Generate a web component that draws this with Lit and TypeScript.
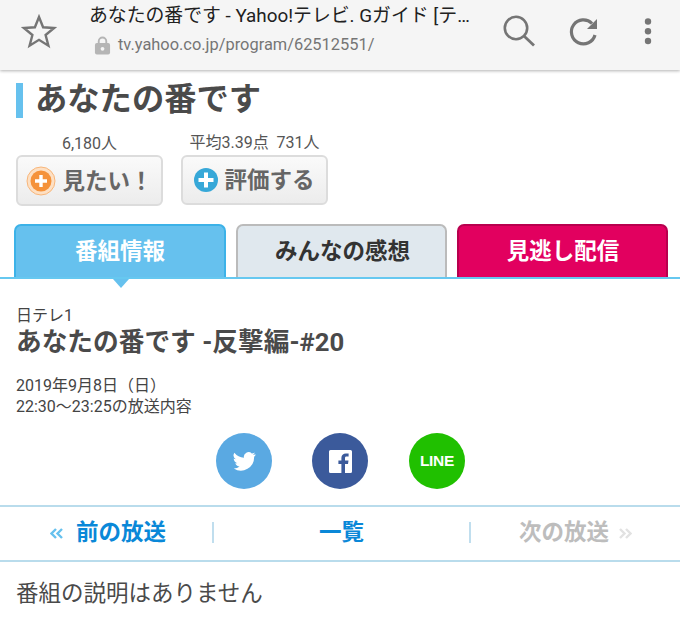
import { LitElement, html, css } from "lit";
import { customElement } from "lit/decorators.js";

@customElement("app-root")
export class AppRoot extends LitElement {
  static styles = css`
    :host { display: block; width: 680px; height: 621px; overflow: hidden; background: #fff; color: #4a4a4a;
      font-family: Roboto, "Noto Sans CJK JP", sans-serif; }
    .bar { height: 70px; background: #f5f5f5; box-shadow: 0 1px 3px rgba(0,0,0,.3); display: flex; align-items: flex-start; position: relative; }
    .star { width: 40px; height: 40px; margin: 11px 30px 0 19px; flex: none; }
    .addr { width: 385px; flex: none; padding-top: 3px; }
    .ttl { font-size: 18.85px; line-height: 26px; color: #212121; white-space: nowrap; }
    .url { display: flex; align-items: center; gap: 7px; margin-top: 5px; margin-left: 5px; font-size: 16.4px; line-height: 22px; color: #757575; }
    .tools { display: flex; margin-left: 26px; }
    .tools svg { display: block; flex: none; }
    .tools .rl { margin-left: 28px; }
    .tools .dots { margin-left: 41px; }
    .head { display: flex; align-items: center; margin: 13px 0 0 16px; height: 35px; }
    .head i { width: 7px; height: 35px; background: #66c1ee; margin-right: 12px; }
    .head h1 { margin: -2px 0 0; font-size: 32.3px; line-height: 35px; font-weight: 700; color: #4a4a4a; }
    .acts { display: flex; gap: 18px; margin: 16px 0 0 16px; }
    .act { width: 147px; display: flex; flex-direction: column; align-items: center; }
    .cnt { font-size: 16px; line-height: 20px; height: 21px; color: #555; white-space: pre; }
    .btn { box-sizing: border-box; width: 147px; height: 51px; border: 2px solid #dcdcdc; border-radius: 6px;
      background: linear-gradient(#fafafa, #ececec); display: flex; align-items: center; justify-content: center; gap: 5px;
      font-size: 22.5px; line-height: 30px; font-weight: 700; color: #666; }
    .act.a .btn span { margin-left: 1px; }
    .act.b { margin-top: -1px; }
    .act.b .btn { height: 50px; margin-top: 1px; }
    .act.b .btn span { margin-left: 1px; }
    .tabs { display: flex; gap: 10px; margin: 18px 12px 0 14px; height: 53px; }
    .tab { flex: none; width: 211px; box-sizing: border-box; border: 2px solid; border-bottom: 0; border-radius: 7px 7px 0 0;
      display: flex; align-items: center; justify-content: center; font-size: 22.5px; font-weight: 700; padding-bottom: 5px; }
    .tab.a { width: 212px; background: #66c1ee; border-color: #3cb2e8; color: #fff; }
    .tab.m { background: #e0e8ee; border-color: #bbb; color: #333; padding-left: 2px; }
    .tab.v { background: #e2005f; border-color: #b8004e; color: #fff; padding-left: 1px; }
    .rule { height: 2px; background: #66c8f0; position: relative; }
    .rule::after { content: ""; position: absolute; left: 113px; top: 2px; border: 8px solid transparent; border-top: 9px solid #66c1ee; border-bottom: 0; }
    .info { padding: 27px 16px 0; }
    .ch { font-size: 16px; line-height: 20px; color: #444; }
    h2 { margin: 0; font-size: 25.7px; line-height: 32px; font-weight: 700; color: #4a4a4a; }
    .dt { margin-top: 17px; font-size: 16px; line-height: 21px; color: #444; }
    .share { display: flex; justify-content: center; gap: 40px; margin-top: 16px; padding-left: 1px; }
    .share a { display: flex; align-items: center; justify-content: center; width: 56px; height: 56px; border-radius: 50%; }
    .tw { background: #5aa9e2; } .fb { background: #3b5a9b; }
    .share .ln { background: #20c000; color: #fff; font: 700 15.500px "Liberation Sans", sans-serif; letter-spacing: -.3px; margin-left: 1px; }
    .nav { display: flex; align-items: center; height: 53px; margin-top: 16px; border-top: 2px solid #b9dcec; border-bottom: 2px solid #b9dcec; }
    .nav > div { flex: 1; display: flex; align-items: center; justify-content: center; font-size: 22.5px; line-height: 30px; font-weight: 700; color: #0a88d8; }
    .nav .sep { flex: none; width: 2px; height: 21px; margin-top: -2px; background: #c0deee; }
    .nav .p { width: 212px; flex: none; padding-left: 4px; box-sizing: border-box; gap: 13px; }
    .nav .c { width: 255px; flex: none; }
    .nav .n { color: #bdbdbd; gap: 10px; }
    .nav span { margin-top: -4px; }
    .desc { margin: 16px 0 0 16px; font-size: 22.5px; line-height: 30px; color: #4a4a4a; }
  `;

  render() {
    return html`
      <div class="bar">
        <svg class="star" viewBox="0 0 40 40"><path d="M20 6l4.100 10.300 11 .7-8.500 7 2.800 10.700L20 28.800 10.600 34.700l2.800-10.700-8.500-7 11-.7z" fill="none" stroke="#757575" stroke-width="2.400" stroke-linejoin="miter"/></svg>
        <div class="addr">
          <div class="ttl">あなたの番です - Yahoo!テレビ. Gガイド [テ…</div>
          <div class="url">
            <svg width="17" height="20" viewBox="0 0 18 20"><path d="M5 9V6a4 4 0 0 1 8 0v3" fill="none" stroke="#b5b5b5" stroke-width="2"/><rect x="1" y="8" width="16" height="12" rx="2" fill="#b5b5b5"/><circle cx="9" cy="14" r="2" fill="#f5f5f5"/></svg>
            <span>tv.yahoo.co.jp/program/62512551/</span>
          </div>
        </div>
        <div class="tools">
          <svg width="40" height="50" viewBox="0 0 40 50"><circle cx="16" cy="28" r="11.200" fill="none" stroke="#757575" stroke-width="2.600"/><path d="M24 36l10 9.500" stroke="#757575" stroke-width="2.800"/></svg>
          <svg class="rl" width="32" height="50" viewBox="0 0 32 50"><path d="M24 23.500A12 12 0 1 0 27 35" fill="none" stroke="#757575" stroke-width="3.200"/><path d="M19 29h10V19z" fill="#757575"/></svg>
          <svg class="dots" width="14" height="50" viewBox="0 0 14 50"><g fill="#757575"><circle cx="7" cy="21.500" r="3.200"/><circle cx="7" cy="31.300" r="3.200"/><circle cx="7" cy="41" r="3.200"/></g></svg>
        </div>
      </div>
      <div class="head"><i></i><h1>あなたの番です</h1></div>
      <div class="acts">
        <div class="act a">
          <div class="cnt">6,180人</div>
          <div class="btn">
            <svg width="30" height="30" viewBox="0 0 30 30"><circle cx="15" cy="15" r="14" fill="#fde0c4" stroke="#f8b67a"/><circle cx="15" cy="15" r="10.500" fill="#f5923a"/><path d="M15 9v12M9 15h12" stroke="#fff" stroke-width="3.400"/></svg>
            <span>見たい！</span>
          </div>
        </div>
        <div class="act b">
          <div class="cnt">平均3.39点  731人</div>
          <div class="btn">
            <svg width="24" height="24" viewBox="0 0 24 24"><circle cx="12" cy="12" r="12" fill="#37a8d8"/><path d="M12 4.500v15M4.500 12h15" stroke="#fff" stroke-width="4"/></svg>
            <span>評価する</span>
          </div>
        </div>
      </div>
      <div class="tabs">
        <div class="tab a">番組情報</div>
        <div class="tab m">みんなの感想</div>
        <div class="tab v">見逃し配信</div>
      </div>
      <div class="rule"></div>
      <div class="info">
        <div class="ch">日テレ1</div>
        <h2>あなたの番です -反撃編-#20</h2>
        <div class="dt">2019年9月8日（日）<br />22:30〜23:25の放送内容</div>
      </div>
      <div class="share">
        <a class="tw"><svg width="23" height="19" viewBox="0 0 24 20"><path fill="#fff" d="M23.500 2.400c-.9.400-1.800.6-2.800.8 1-.6 1.800-1.500 2.100-2.700-.9.600-2 1-3.100 1.200A4.900 4.900 0 0 0 11.400 6.100 13.900 13.900 0 0 1 1.300.9a4.900 4.900 0 0 0 1.500 6.600c-.8 0-1.500-.2-2.200-.6 0 2.400 1.700 4.400 3.900 4.900-.7.200-1.500.2-2.200.1.600 2 2.400 3.400 4.600 3.400A9.900 9.900 0 0 1 .7 17.300 13.900 13.900 0 0 0 22.100 5c1-.7 1.800-1.600 1.400-2.600z"/></svg></a>
        <a class="fb"><svg width="23" height="23" viewBox="0 0 23 23"><path fill="#fff" d="M1.500 0h20A1.500 1.500 0 0 1 23 1.500v20a1.500 1.500 0 0 1-1.500 1.500H16v-9h3l.5-3.500H16V8.300c0-1 .3-1.700 1.700-1.700h1.900V3.500c-.3 0-1.400-.1-2.700-.1-2.700 0-4.500 1.600-4.500 4.600v2.500h-3V14h3v9H1.500A1.500 1.500 0 0 1 0 21.500v-20A1.500 1.500 0 0 1 1.500 0z"/></svg></a>
        <a class="ln">LINE</a>
      </div>
      <div class="nav">
        <div class="p"><svg width="13" height="11" viewBox="0 0 13 11"><path d="M6 1L1.500 5.500 6 10M12 1L7.500 5.500 12 10" fill="none" stroke="#66c1ee" stroke-width="2.400"/></svg><span>前の放送</span></div>
        <div class="sep"></div>
        <div class="c"><span>一覧</span></div>
        <div class="sep"></div>
        <div class="n"><span>次の放送</span><svg width="13" height="11" viewBox="0 0 13 11"><path d="M1 1l4.500 4.500L1 10M7 1l4.500 4.500L7 10" fill="none" stroke="#e2e2e2" stroke-width="2.400"/></svg></div>
      </div>
      <div class="desc">番組の説明はありません</div>
    `;
  }
}
